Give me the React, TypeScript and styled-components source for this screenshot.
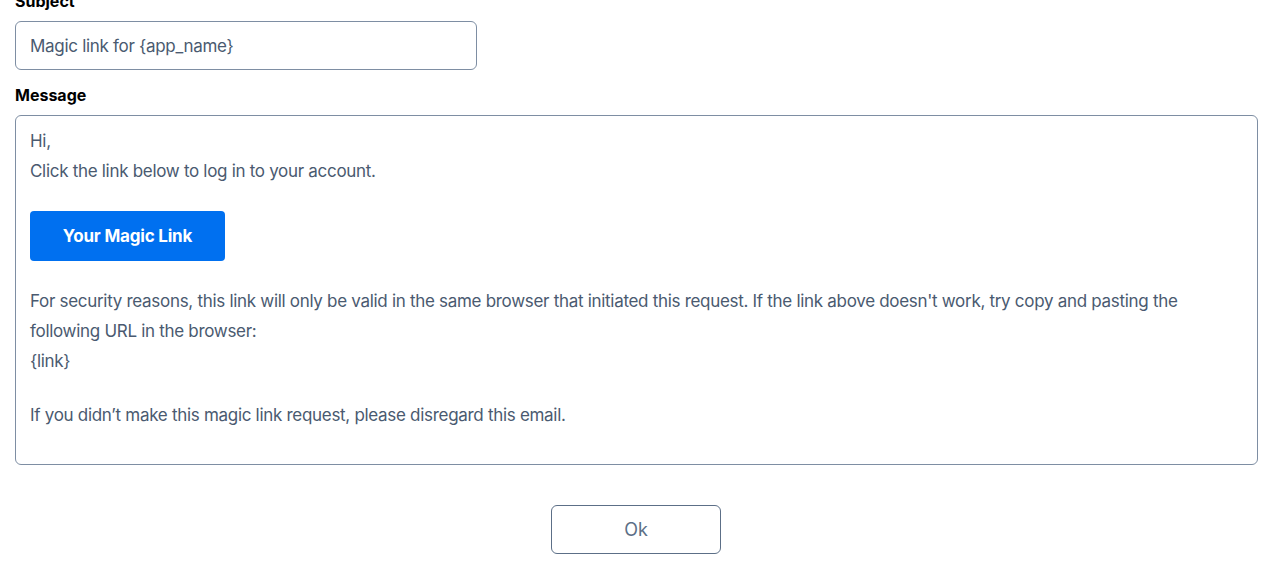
import React from "react";
import styled, { createGlobalStyle } from "styled-components";

const Global = createGlobalStyle`
  html, body { margin: 0; padding: 0; background: #fff; }
  body { font-family: Inter, "Noto Sans", sans-serif; overflow: hidden; }
`;

const Page = styled.div`
  padding: 0 16px 0 15px;
  margin-top: -11px;
  display: flex;
  flex-direction: column;
`;

const Label = styled.label`
  display: block;
  font-size: 16px;
  line-height: 24px;
  font-weight: 700;
  color: #000;
  margin-bottom: 8px;
`;

const Input = styled.div`
  box-sizing: border-box;
  width: 462px;
  height: 49px;
  border: 1px solid #7e8ea3;
  border-radius: 6px;
  padding: 0 14px;
  display: flex;
  align-items: center;
  font-size: 17px;
  letter-spacing: -0.3px;
  color: #4a5a70;
  margin-bottom: 13px;
`;

const Editor = styled.div`
  box-sizing: border-box;
  height: 350px;
  border: 1px solid #7e8ea3;
  border-radius: 6px;
  padding: 10px 14px;
  font-size: 17px;
  letter-spacing: -0.3px;
  line-height: 30px;
  color: #4a5a70;
`;

const Para = styled.p<{ $mt?: number }>`
  margin: ${(p) => p.$mt ?? 0}px 0 0;
`;

const MagicButton = styled.a`
  display: inline-flex;
  align-items: center;
  justify-content: center;
  width: 195px;
  height: 50px;
  margin-top: 25px;
  background: #0070f0;
  color: #fff;
  border-radius: 4px;
  font-weight: 700;
  font-size: 17px;
  letter-spacing: -0.2px;
  text-decoration: none;
`;

const Footer = styled.div`
  display: flex;
  justify-content: center;
  margin-top: 40px;
  padding-right: 1px;
`;

const OkButton = styled.button`
  box-sizing: border-box;
  width: 170px;
  height: 49px;
  background: #fff;
  border: 1px solid #5c6f87;
  border-radius: 6px;
  font-family: inherit;
  font-size: 18px;
  color: #5c6f87;
`;

export default function App() {
  return (
    <>
      <Global />
      <Page>
        <Label>Subject</Label>
        <Input>Magic link for {"{app_name}"}</Input>
        <Label>Message</Label>
        <Editor>
          <Para>
            Hi,
            <br />
            Click the link below to log in to your account.
          </Para>
          <MagicButton>Your Magic Link</MagicButton>
          <Para $mt={25}>
            For security reasons, this link will only be valid in the same browser that initiated this request. If the link above doesn't work, try copy and pasting the following URL in the browser:
            <br />
            {"{link}"}
          </Para>
          <Para $mt={24}>If you didn’t make this magic link request, please disregard this email.</Para>
        </Editor>
        <Footer>
          <OkButton>Ok</OkButton>
        </Footer>
      </Page>
    </>
  );
}
